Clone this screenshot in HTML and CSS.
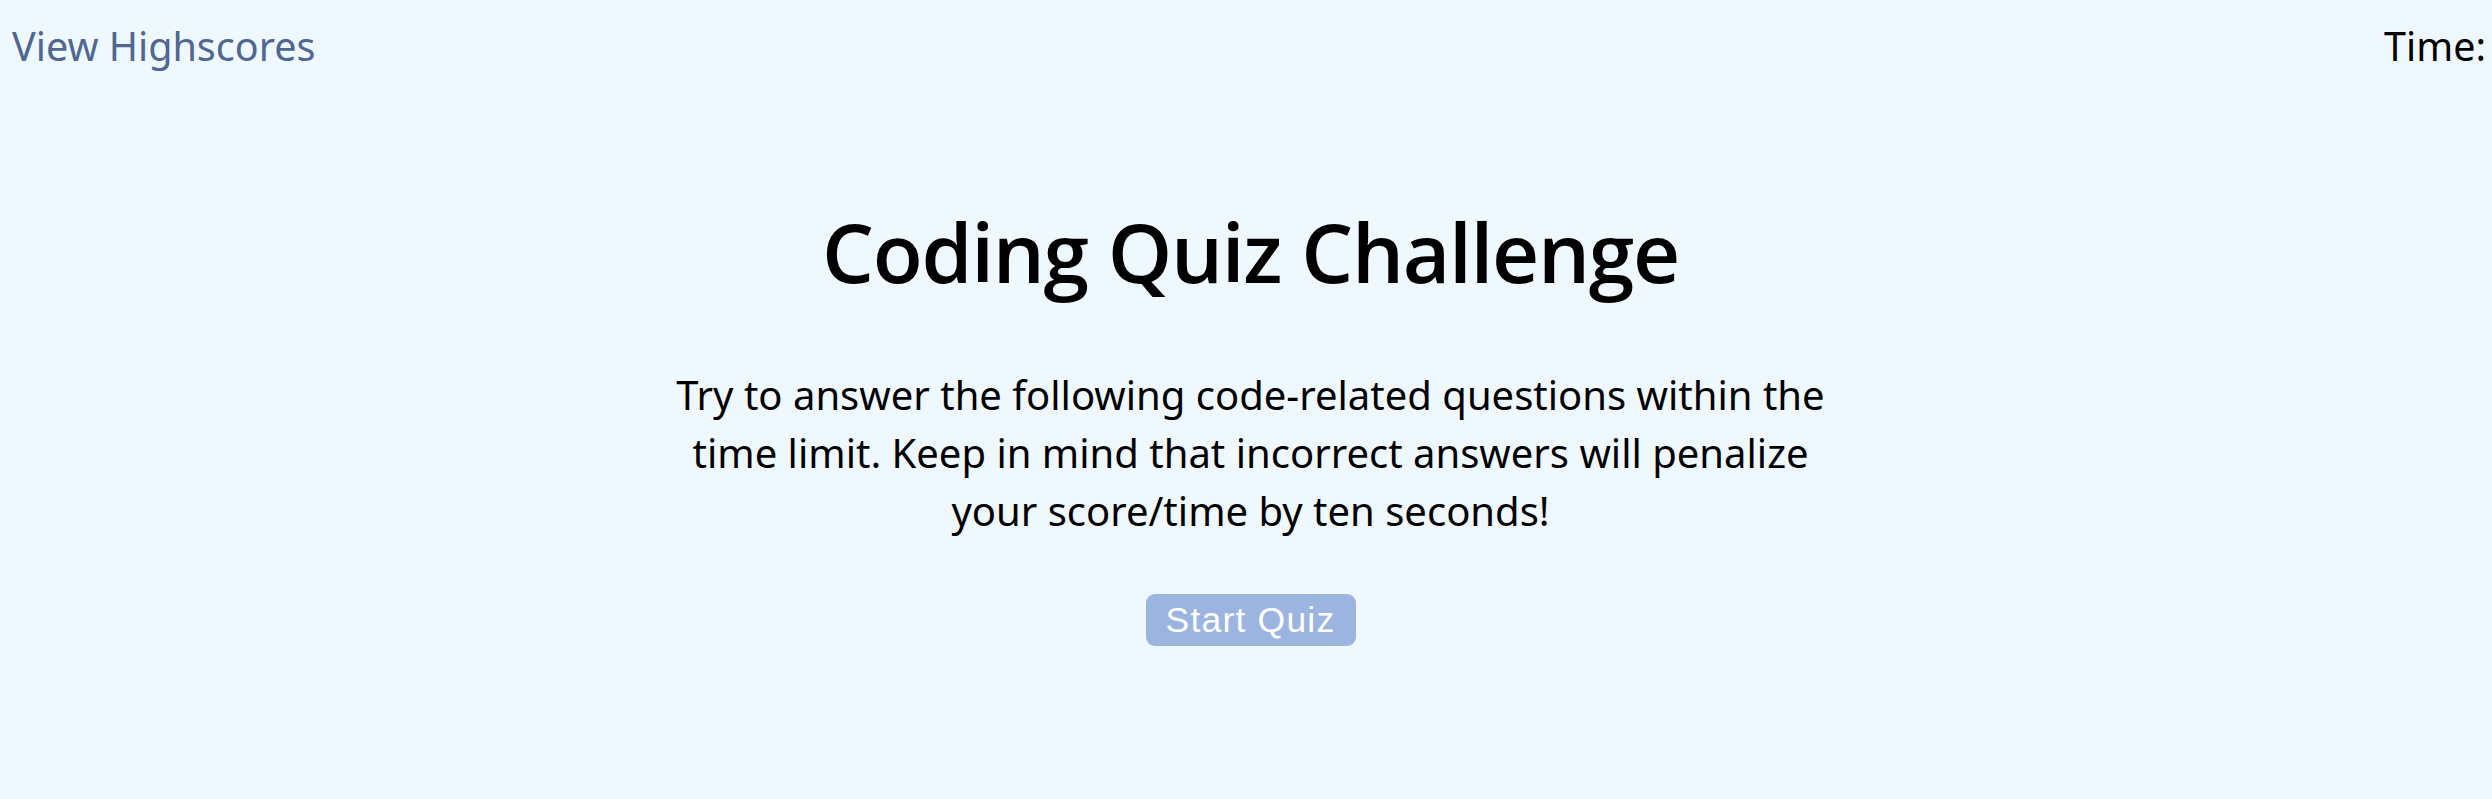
FILE: index.html
```html
<!DOCTYPE html>
<html lang="en">
<head>
<meta charset="utf-8">
<title>Coding Quiz Challenge</title>
<link rel="stylesheet" href="styles.css">
</head>
<body>
<header class="topbar">
  <a class="highscores" href="#">View Highscores</a>
  <div class="timer">Time: <span class="time-value"></span></div>
</header>
<main class="intro">
  <h1 class="title">Coding Quiz Challenge</h1>
  <p class="description">Try to answer the following code-related questions within the time limit. Keep in mind that incorrect answers will penalize your score/time by ten seconds!</p>
  <button class="start-btn" type="button">Start Quiz</button>
</main>
</body>
</html>
```
FILE: styles.css
```css
html, body {
  margin: 0;
  padding: 0;
}
body {
  background: #f0f8ff;
  font-family: "Noto Sans", "Open Sans", sans-serif;
  color: #000;
}
.topbar {
  display: flex;
  justify-content: space-between;
  align-items: flex-start;
  padding: 19px 6px 0 12px;
  font-size: 39.5px;
  line-height: normal;
}
.highscores {
  color: #4f6791;
  text-decoration: none;
}
.timer {
  color: #000;
}
.intro {
  display: flex;
  flex-direction: column;
  align-items: center;
  text-align: center;
  padding-left: 9px;
}
.title {
  margin: 122px 0 0;
  font-family: "Open Sans", "Noto Sans", sans-serif;
  font-size: 82px;
  font-weight: 650;
  letter-spacing: -1.3px;
  line-height: normal;
}
.description {
  margin: 59px 0 0;
  max-width: 1180px;
  font-size: 40px;
  line-height: 58px;
}
.start-btn {
  margin-top: 54px;
  width: 210px;
  height: 52px;
  border: none;
  border-radius: 9px;
  background: #9cb5e0;
  color: #fff;
  font-family: "Liberation Sans", Arial, sans-serif;
  font-size: 35.5px;
  letter-spacing: 1.2px;
  padding: 0;
  cursor: pointer;
}
```
